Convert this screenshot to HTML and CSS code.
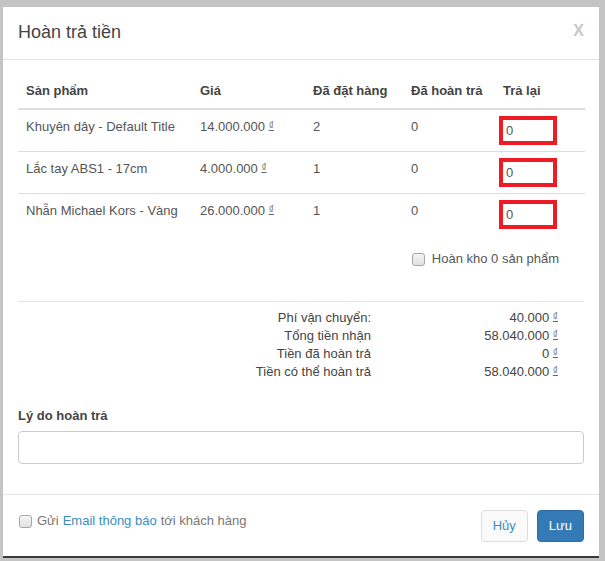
FILE: index.html
```html
<!DOCTYPE html>
<html lang="vi">
<head>
<meta charset="utf-8">
<title>Hoàn trả tiền</title>
<link rel="stylesheet" href="styles.css">
</head>
<body>
<div class="modal">
  <div class="modal-header">
    <h4 class="modal-title">Hoàn trả tiền</h4>
    <span class="close">X</span>
  </div>
  <div class="modal-body">
    <table class="items">
      <colgroup>
        <col class="c1"><col class="c2"><col class="c3"><col class="c4"><col class="c5">
      </colgroup>
      <thead>
        <tr><th>Sản phẩm</th><th>Giá</th><th>Đã đặt hàng</th><th>Đã hoàn trả</th><th>Trả lại</th></tr>
      </thead>
      <tbody>
        <tr><td>Khuyên dây - Default Title</td><td>14.000.000 <span class="cur">₫</span></td><td>2</td><td>0</td><td><input class="qty" type="text" value="0"></td></tr>
        <tr><td>Lắc tay ABS1 - 17cm</td><td>4.000.000 <span class="cur">₫</span></td><td>1</td><td>0</td><td><input class="qty" type="text" value="0"></td></tr>
        <tr><td>Nhẫn Michael Kors - Vàng</td><td>26.000.000 <span class="cur">₫</span></td><td>1</td><td>0</td><td><input class="qty" type="text" value="0"></td></tr>
      </tbody>
    </table>
    <div class="restock">
      <label class="check"><input type="checkbox" class="cb"> Hoàn kho 0 sản phẩm</label>
    </div>
    <hr class="sep">
    <div class="summary">
      <div class="lbl">Phí vận chuyển:</div><div class="val">40.000 <span class="cur">₫</span></div>
      <div class="lbl">Tổng tiền nhận</div><div class="val">58.040.000 <span class="cur">₫</span></div>
      <div class="lbl">Tiền đã hoàn trả</div><div class="val">0 <span class="cur">₫</span></div>
      <div class="lbl">Tiền có thể hoàn trả</div><div class="val">58.040.000 <span class="cur">₫</span></div>
    </div>
    <div class="form-group">
      <label class="field-label">Lý do hoàn trả</label>
      <input class="reason" type="text">
    </div>
  </div>
  <div class="modal-footer">
    <label class="check notify"><input type="checkbox" class="cb"> Gửi <span class="link">Email thông báo</span> tới khách hàng</label>
    <div class="actions">
      <button class="btn btn-default">Hủy</button>
      <button class="btn btn-primary">Lưu</button>
    </div>
  </div>
</div>
</body>
</html>
```
FILE: styles.css
```css
* { box-sizing: border-box; }
html, body { margin: 0; padding: 0; }
body {
  background: #c4c4c4;
  font-family: "Liberation Sans", Arial, sans-serif;
  font-size: 13px;
  color: #555;
  width: 605px;
  height: 561px;
  overflow: hidden;
}
.modal {
  margin: 7px 0 0 3px;
  width: 596px;
  background: #fff;
  box-shadow: 0 2px 0 #3a3a3a;
}
.modal-header {
  display: flex;
  justify-content: space-between;
  align-items: center;
  padding: 11px 15px 13px 15px;
  border-bottom: 1px solid #e5e5e5;
}
.modal-title {
  margin: 0;
  font-size: 18px;
  line-height: 28px;
  font-weight: normal;
  color: #444;
}
.close {
  font-size: 16px;
  font-weight: bold;
  color: #c8c8c8;
  line-height: 16px;
  margin-top: -2px;
}
.modal-body {
  padding: 14px 15px 30px 15px;
}
.items {
  width: 100%;
  border-collapse: collapse;
  table-layout: fixed;
}
.c1 { width: 174px; }
.c2 { width: 113px; }
.c3 { width: 98px; }
.c4 { width: 92px; }
.c5 { width: 90px; }
.items th {
  text-align: left;
  padding: 8px;
  line-height: 18px;
  font-weight: bold;
  color: #444;
  border-bottom: 2px solid #ddd;
  white-space: nowrap;
}
.items td {
  padding: 8px;
  line-height: 18px;
  vertical-align: top;
  white-space: nowrap;
}
.items tbody tr + tr td { border-top: 1px solid #ddd; }
.cur {
  font-size: 10px;
  line-height: 0;
  text-decoration: underline;
  color: #666;
  position: relative;
  top: -2px;
}
.qty {
  display: block;
  width: 54px;
  height: 25px;
  margin-left: -2px;
  padding: 0 0 0 4px;
  border: 1px solid #999;
  outline: 4px solid #ed1c24;
  outline-offset: -2px;
  font-family: "Liberation Sans", Arial, sans-serif;
  font-size: 13px;
  color: #555;
  background: #fff;
}
.restock {
  display: flex;
  justify-content: flex-end;
  padding-right: 25px;
  margin-top: 15px;
}
.check {
  display: flex;
  align-items: center;
  line-height: 18px;
  color: #555;
}
.cb {
  appearance: none;
  -webkit-appearance: none;
  width: 13px;
  height: 13px;
  margin: 0 7px 0 0;
  border: 1px solid #a6a6a6;
  border-radius: 3px;
  background: linear-gradient(#f4f4f4, #e2e2e2);
}
.sep {
  margin: 33px 0 0 0;
  border: 0;
  border-top: 1px solid #e5e5e5;
}
.summary {
  display: grid;
  grid-template-columns: 1fr 187px;
  padding-right: 26px;
  margin-top: 7px;
  line-height: 18px;
  color: #444;
}
.lbl, .val { text-align: right; }
.form-group { margin-top: 26px; }
.field-label {
  display: block;
  font-weight: bold;
  color: #444;
  line-height: 18px;
  margin-bottom: 6px;
}
.reason {
  display: block;
  width: 100%;
  height: 33px;
  border: 1px solid #ccc;
  border-radius: 4px;
  background: #fff;
}
.modal-footer {
  display: flex;
  justify-content: space-between;
  align-items: flex-start;
  padding: 15px 15px 14px 15px;
  border-top: 1px solid #e5e5e5;
}
.notify {
  color: #777;
  margin-top: 2px;
  margin-left: 1px;
}
.notify .cb { margin-right: 5px; }
.link { color: #3c8dbc; margin: 0 4px; }
.actions { display: flex; gap: 9px; }
.btn {
  font-family: "Liberation Sans", Arial, sans-serif;
  font-size: 13px;
  line-height: 18px;
  padding: 6px 11px;
  border-radius: 4px;
  border: 1px solid transparent;
}
.btn-default {
  background: #fafafa;
  border-color: #ddd;
  color: #3c8dbc;
}
.btn-primary {
  background: #337ab7;
  border-color: #2e6da4;
  color: #fff;
}
```
